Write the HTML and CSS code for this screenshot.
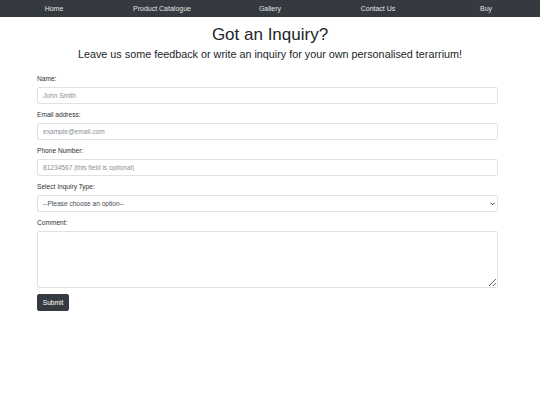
FILE: index.html
```html
<!DOCTYPE html>
<html lang="en">
<head>
<meta charset="utf-8">
<title>Got an Inquiry?</title>
<link rel="stylesheet" href="styles.css">
</head>
<body>
<nav class="navbar">
  <a class="nav-link" href="#">Home</a>
  <a class="nav-link" href="#">Product Catalogue</a>
  <a class="nav-link" href="#">Gallery</a>
  <a class="nav-link" href="#">Contact Us</a>
  <a class="nav-link" href="#">Buy</a>
</nav>
<header class="intro">
  <h1 class="title">Got an Inquiry?</h1>
  <p class="subtitle">Leave us some feedback or write an inquiry for your own personalised terarrium!</p>
</header>
<form class="form">
  <div class="group">
    <label class="label" for="name">Name:</label>
    <input class="control" id="name" type="text" placeholder="John Smith">
  </div>
  <div class="group">
    <label class="label" for="email">Email address:</label>
    <input class="control" id="email" type="email" placeholder="example@email.com">
  </div>
  <div class="group">
    <label class="label" for="phone">Phone Number:</label>
    <input class="control" id="phone" type="text" placeholder="81234567 (this field is optional)">
  </div>
  <div class="group">
    <label class="label" for="type">Select Inquiry Type:</label>
    <div class="select-wrap">
      <select class="control select" id="type">
        <option>--Please choose an option--</option>
      </select>
      <svg class="chevron" width="5" height="4" viewBox="0 0 10 8" aria-hidden="true">
        <path d="M1 1.5 L5 5.5 L9 1.5" fill="none" stroke="#333" stroke-width="2"/>
      </svg>
    </div>
  </div>
  <div class="group">
    <label class="label" for="comment">Comment:</label>
    <textarea class="control area" id="comment"></textarea>
  </div>
  <button class="btn" type="button">Submit</button>
</form>
</body>
</html>
```
FILE: styles.css
```css
* { box-sizing: border-box; }
html, body { margin: 0; padding: 0; background: #fff; }
body {
  font-family: "Liberation Sans", Arial, sans-serif;
  color: #212529;
}
.navbar {
  display: grid;
  grid-template-columns: repeat(5, 1fr);
  align-items: center;
  height: 17px;
  background: #343a40;
}
.nav-link {
  text-align: center;
  color: #e3e4e5;
  font-size: 7px;
  line-height: 17px;
  text-decoration: none;
}
.intro {
  text-align: center;
  padding-top: 6px;
}
.title {
  margin: 0;
  font-size: 17px;
  font-weight: 400;
  line-height: 24px;
}
.subtitle {
  margin: 0;
  font-size: 10.8px;
  line-height: 14px;
}
.form {
  margin: 13px 42px 0 37px;
}
.group {
  display: flex;
  flex-direction: column;
  margin-bottom: 6px;
}
.label {
  font-size: 6.6px;
  line-height: 10px;
  margin-bottom: 3px;
  color: #2b3035;
}
.control {
  width: 100%;
  height: 17px;
  padding: 0 5px;
  font-family: "Liberation Sans", Arial, sans-serif;
  font-size: 6.6px;
  color: #495057;
  background: #fff;
  border: 1px solid #dfe2e5;
  border-radius: 2px;
  outline: none;
}
.control::placeholder { color: #8a9096; }
.select-wrap { position: relative; }
.select {
  appearance: none;
  -webkit-appearance: none;
  display: block;
  padding: 0 5px;
  color: #495057;
}
.chevron {
  position: absolute;
  right: 3px;
  top: 7px;
}
.area { height: 57px; resize: vertical; display: block; }
.btn {
  display: block;
  margin: 0;
  height: 17px;
  width: 32px;
  padding: 0;
  font-family: "Liberation Sans", Arial, sans-serif;
  font-size: 6.6px;
  color: #fff;
  background: #343a40;
  border: 1px solid #343a40;
  border-radius: 2px;
}
```
